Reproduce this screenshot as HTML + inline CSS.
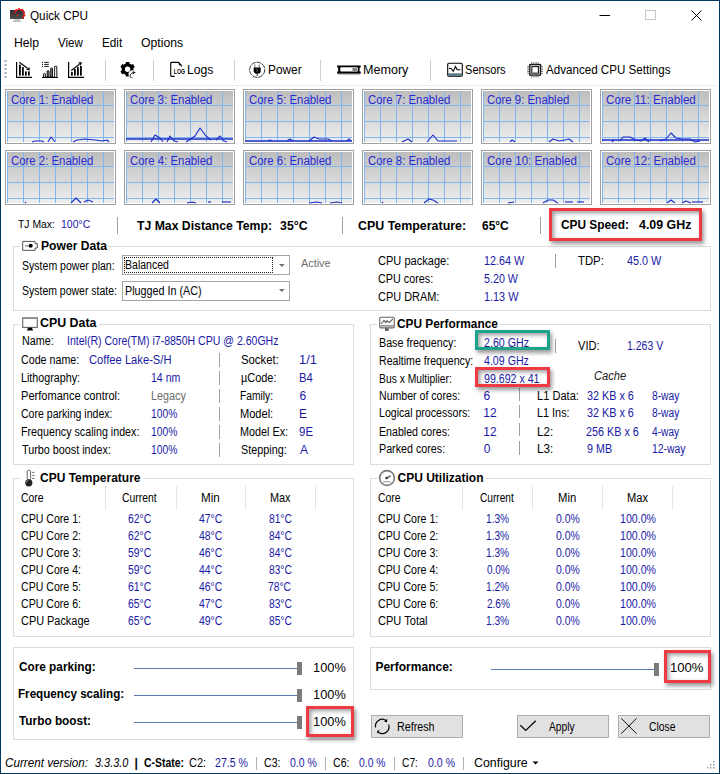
<!DOCTYPE html>
<html><head><meta charset="utf-8"><title>Quick CPU</title>
<style>
html,body{margin:0;padding:0;background:#fff;}
body{width:720px;height:774px;position:relative;overflow:hidden;font-family:"Liberation Sans",sans-serif;color:#000;}
.t{position:absolute;white-space:nowrap;line-height:normal;transform-origin:0 0;}
svg{position:absolute;overflow:visible;}
</style></head><body>
<div style="position:absolute;left:0;top:0;width:720px;height:774px;box-sizing:border-box;border:1px solid #003a5c"></div>
<div class="t" style="left:29.95px;top:9px;font-size:12px;transform:scaleX(0.9766);">Quick CPU</div>
<div class="t" style="left:13.60px;top:36px;font-size:12px;transform:scaleX(1.0174);">Help</div>
<div class="t" style="left:58.24px;top:36px;font-size:12px;transform:scaleX(0.9591);">View</div>
<div class="t" style="left:101.84px;top:36px;font-size:12px;transform:scaleX(0.9792);">Edit</div>
<div class="t" style="left:141.13px;top:36px;font-size:12px;transform:scaleX(1.0184);">Options</div>
<div class="t" style="left:186.50px;top:63px;font-size:12px;transform:scaleX(1.0163);">Logs</div>
<div class="t" style="left:267.53px;top:63px;font-size:12px;transform:scaleX(0.9902);">Power</div>
<div class="t" style="left:363.37px;top:63px;font-size:12px;transform:scaleX(1.0479);">Memory</div>
<div class="t" style="left:465.49px;top:63px;font-size:12px;transform:scaleX(0.9226);">Sensors</div>
<div class="t" style="left:545.98px;top:63px;font-size:12px;transform:scaleX(0.9666);">Advanced CPU Settings</div>
<div style="position:absolute;left:105px;top:60px;width:1px;height:21px;background:#d0d0d0"></div>
<div style="position:absolute;left:153px;top:60px;width:1px;height:21px;background:#d0d0d0"></div>
<div style="position:absolute;left:234px;top:60px;width:1px;height:21px;background:#d0d0d0"></div>
<div style="position:absolute;left:320px;top:60px;width:1px;height:21px;background:#d0d0d0"></div>
<div style="position:absolute;left:430px;top:60px;width:1px;height:21px;background:#d0d0d0"></div>
<div style="position:absolute;left:3px;top:85px;width:714px;height:1px;background:#ececec"></div>
<svg style="left:5px;top:89px" width="111" height="55"><defs><linearGradient id="g1" x1="0" y1="0" x2="0" y2="1"><stop offset="0" stop-color="#bdbdbd"/><stop offset="1" stop-color="#eeeeee"/></linearGradient></defs><rect x="0.5" y="0.5" width="110" height="54" fill="#fff" stroke="#a0a0a0"/><rect x="2" y="2" width="107" height="51" fill="url(#g1)"/><path d="M2.5 2V53M18.5 2V53M34.5 2V53M50.5 2V53M66.5 2V53M82.5 2V53M98.5 2V53M2 16.5H109M2 32.5H109M2 48.5H109" stroke="#80b6f0" stroke-width="1" fill="none"/><polyline points="27,53 30,52 37,52 39,53" stroke="#1c2fc8" stroke-width="1.15" fill="none" stroke-linejoin="round"/><polyline points="43,53 46,48 50,53" stroke="#1c2fc8" stroke-width="1.15" fill="none" stroke-linejoin="round"/><polyline points="68,53 72,51 80,50 90,51 98,52 102,51 104,53" stroke="#1c2fc8" stroke-width="1.15" fill="none" stroke-linejoin="round"/></svg>
<svg style="left:5px;top:150px" width="111" height="55"><defs><linearGradient id="g2" x1="0" y1="0" x2="0" y2="1"><stop offset="0" stop-color="#bdbdbd"/><stop offset="1" stop-color="#eeeeee"/></linearGradient></defs><rect x="0.5" y="0.5" width="110" height="54" fill="#fff" stroke="#a0a0a0"/><rect x="2" y="2" width="107" height="51" fill="url(#g2)"/><path d="M2.5 2V53M18.5 2V53M34.5 2V53M50.5 2V53M66.5 2V53M82.5 2V53M98.5 2V53M2 16.5H109M2 32.5H109M2 48.5H109" stroke="#80b6f0" stroke-width="1" fill="none"/><polyline points="20,53 21,52" stroke="#1c2fc8" stroke-width="1.15" fill="none" stroke-linejoin="round"/><polyline points="66,53 71,48 76,53" stroke="#1c2fc8" stroke-width="1.15" fill="none" stroke-linejoin="round"/><polyline points="79,52 83,50 88,52" stroke="#1c2fc8" stroke-width="1.15" fill="none" stroke-linejoin="round"/></svg>
<svg style="left:124px;top:89px" width="111" height="55"><defs><linearGradient id="g3" x1="0" y1="0" x2="0" y2="1"><stop offset="0" stop-color="#bdbdbd"/><stop offset="1" stop-color="#eeeeee"/></linearGradient></defs><rect x="0.5" y="0.5" width="110" height="54" fill="#fff" stroke="#a0a0a0"/><rect x="2" y="2" width="107" height="51" fill="url(#g3)"/><path d="M2.5 2V53M18.5 2V53M34.5 2V53M50.5 2V53M66.5 2V53M82.5 2V53M98.5 2V53M2 16.5H109M2 32.5H109M2 48.5H109" stroke="#80b6f0" stroke-width="1" fill="none"/><path d="M2 50H109" stroke="#1c2fc8" stroke-width="1.5" fill="none"/><polyline points="27,53 31,46 36,49 39,53" stroke="#1c2fc8" stroke-width="1.15" fill="none" stroke-linejoin="round"/><polyline points="43,53 46,47 50,52 54,53" stroke="#1c2fc8" stroke-width="1.15" fill="none" stroke-linejoin="round"/><polyline points="62,53 68,49 71,47 76,39 82,47 87,51" stroke="#1c2fc8" stroke-width="1.15" fill="none" stroke-linejoin="round"/><polyline points="92,51 96,47 100,52 103,53" stroke="#1c2fc8" stroke-width="1.15" fill="none" stroke-linejoin="round"/></svg>
<svg style="left:124px;top:150px" width="111" height="55"><defs><linearGradient id="g4" x1="0" y1="0" x2="0" y2="1"><stop offset="0" stop-color="#bdbdbd"/><stop offset="1" stop-color="#eeeeee"/></linearGradient></defs><rect x="0.5" y="0.5" width="110" height="54" fill="#fff" stroke="#a0a0a0"/><rect x="2" y="2" width="107" height="51" fill="url(#g4)"/><path d="M2.5 2V53M18.5 2V53M34.5 2V53M50.5 2V53M66.5 2V53M82.5 2V53M98.5 2V53M2 16.5H109M2 32.5H109M2 48.5H109" stroke="#80b6f0" stroke-width="1" fill="none"/><polyline points="28,53 32,49 36,53" stroke="#1c2fc8" stroke-width="1.15" fill="none" stroke-linejoin="round"/><polyline points="63,53 68,52 72,53" stroke="#1c2fc8" stroke-width="1.15" fill="none" stroke-linejoin="round"/><polyline points="84,52 87,52" stroke="#1c2fc8" stroke-width="1.15" fill="none" stroke-linejoin="round"/><polyline points="98,52 107,52" stroke="#1c2fc8" stroke-width="1.15" fill="none" stroke-linejoin="round"/></svg>
<svg style="left:243px;top:89px" width="111" height="55"><defs><linearGradient id="g5" x1="0" y1="0" x2="0" y2="1"><stop offset="0" stop-color="#bdbdbd"/><stop offset="1" stop-color="#eeeeee"/></linearGradient></defs><rect x="0.5" y="0.5" width="110" height="54" fill="#fff" stroke="#a0a0a0"/><rect x="2" y="2" width="107" height="51" fill="url(#g5)"/><path d="M2.5 2V53M18.5 2V53M34.5 2V53M50.5 2V53M66.5 2V53M82.5 2V53M98.5 2V53M2 16.5H109M2 32.5H109M2 48.5H109" stroke="#80b6f0" stroke-width="1" fill="none"/><path d="M2 52H109" stroke="#1c2fc8" stroke-width="1.5" fill="none"/><polyline points="25,52 27,51 29,52" stroke="#1c2fc8" stroke-width="1.15" fill="none" stroke-linejoin="round"/><polyline points="44,52 47,50 50,52" stroke="#1c2fc8" stroke-width="1.15" fill="none" stroke-linejoin="round"/><polyline points="66,52 71,48 76,50 85,50 89,52" stroke="#1c2fc8" stroke-width="1.15" fill="none" stroke-linejoin="round"/><polyline points="104,52 106,50 108,52" stroke="#1c2fc8" stroke-width="1.15" fill="none" stroke-linejoin="round"/></svg>
<svg style="left:243px;top:150px" width="111" height="55"><defs><linearGradient id="g6" x1="0" y1="0" x2="0" y2="1"><stop offset="0" stop-color="#bdbdbd"/><stop offset="1" stop-color="#eeeeee"/></linearGradient></defs><rect x="0.5" y="0.5" width="110" height="54" fill="#fff" stroke="#a0a0a0"/><rect x="2" y="2" width="107" height="51" fill="url(#g6)"/><path d="M2.5 2V53M18.5 2V53M34.5 2V53M50.5 2V53M66.5 2V53M82.5 2V53M98.5 2V53M2 16.5H109M2 32.5H109M2 48.5H109" stroke="#80b6f0" stroke-width="1" fill="none"/><polyline points="66,53 74,52 79,53" stroke="#1c2fc8" stroke-width="1.15" fill="none" stroke-linejoin="round"/><polyline points="87,53 94,52 99,53" stroke="#1c2fc8" stroke-width="1.15" fill="none" stroke-linejoin="round"/></svg>
<svg style="left:362px;top:89px" width="111" height="55"><defs><linearGradient id="g7" x1="0" y1="0" x2="0" y2="1"><stop offset="0" stop-color="#bdbdbd"/><stop offset="1" stop-color="#eeeeee"/></linearGradient></defs><rect x="0.5" y="0.5" width="110" height="54" fill="#fff" stroke="#a0a0a0"/><rect x="2" y="2" width="107" height="51" fill="url(#g7)"/><path d="M2.5 2V53M18.5 2V53M34.5 2V53M50.5 2V53M66.5 2V53M82.5 2V53M98.5 2V53M2 16.5H109M2 32.5H109M2 48.5H109" stroke="#80b6f0" stroke-width="1" fill="none"/><polyline points="40,53 46,50 50,53" stroke="#1c2fc8" stroke-width="1.15" fill="none" stroke-linejoin="round"/><polyline points="65,53 71,46 76,52 86,52 95,52" stroke="#1c2fc8" stroke-width="1.15" fill="none" stroke-linejoin="round"/></svg>
<svg style="left:362px;top:150px" width="111" height="55"><defs><linearGradient id="g8" x1="0" y1="0" x2="0" y2="1"><stop offset="0" stop-color="#bdbdbd"/><stop offset="1" stop-color="#eeeeee"/></linearGradient></defs><rect x="0.5" y="0.5" width="110" height="54" fill="#fff" stroke="#a0a0a0"/><rect x="2" y="2" width="107" height="51" fill="url(#g8)"/><path d="M2.5 2V53M18.5 2V53M34.5 2V53M50.5 2V53M66.5 2V53M82.5 2V53M98.5 2V53M2 16.5H109M2 32.5H109M2 48.5H109" stroke="#80b6f0" stroke-width="1" fill="none"/><polyline points="20,53 21,52" stroke="#1c2fc8" stroke-width="1.15" fill="none" stroke-linejoin="round"/><polyline points="62,53 67,49 71,50 76,53" stroke="#1c2fc8" stroke-width="1.15" fill="none" stroke-linejoin="round"/></svg>
<svg style="left:481px;top:89px" width="111" height="55"><defs><linearGradient id="g9" x1="0" y1="0" x2="0" y2="1"><stop offset="0" stop-color="#bdbdbd"/><stop offset="1" stop-color="#eeeeee"/></linearGradient></defs><rect x="0.5" y="0.5" width="110" height="54" fill="#fff" stroke="#a0a0a0"/><rect x="2" y="2" width="107" height="51" fill="url(#g9)"/><path d="M2.5 2V53M18.5 2V53M34.5 2V53M50.5 2V53M66.5 2V53M82.5 2V53M98.5 2V53M2 16.5H109M2 32.5H109M2 48.5H109" stroke="#80b6f0" stroke-width="1" fill="none"/><polyline points="29,53 31,51 34,53" stroke="#1c2fc8" stroke-width="1.15" fill="none" stroke-linejoin="round"/><polyline points="68,53 72,50 78,52 84,51 88,50 92,53" stroke="#1c2fc8" stroke-width="1.15" fill="none" stroke-linejoin="round"/></svg>
<svg style="left:481px;top:150px" width="111" height="55"><defs><linearGradient id="g10" x1="0" y1="0" x2="0" y2="1"><stop offset="0" stop-color="#bdbdbd"/><stop offset="1" stop-color="#eeeeee"/></linearGradient></defs><rect x="0.5" y="0.5" width="110" height="54" fill="#fff" stroke="#a0a0a0"/><rect x="2" y="2" width="107" height="51" fill="url(#g10)"/><path d="M2.5 2V53M18.5 2V53M34.5 2V53M50.5 2V53M66.5 2V53M82.5 2V53M98.5 2V53M2 16.5H109M2 32.5H109M2 48.5H109" stroke="#80b6f0" stroke-width="1" fill="none"/><polyline points="27,53 33,52" stroke="#1c2fc8" stroke-width="1.15" fill="none" stroke-linejoin="round"/><polyline points="62,53 67,50 72,50 77,53" stroke="#1c2fc8" stroke-width="1.15" fill="none" stroke-linejoin="round"/><polyline points="84,52 92,52" stroke="#1c2fc8" stroke-width="1.15" fill="none" stroke-linejoin="round"/><polyline points="96,52 103,52" stroke="#1c2fc8" stroke-width="1.15" fill="none" stroke-linejoin="round"/></svg>
<svg style="left:600px;top:89px" width="111" height="55"><defs><linearGradient id="g11" x1="0" y1="0" x2="0" y2="1"><stop offset="0" stop-color="#bdbdbd"/><stop offset="1" stop-color="#eeeeee"/></linearGradient></defs><rect x="0.5" y="0.5" width="110" height="54" fill="#fff" stroke="#a0a0a0"/><rect x="2" y="2" width="107" height="51" fill="url(#g11)"/><path d="M2.5 2V53M18.5 2V53M34.5 2V53M50.5 2V53M66.5 2V53M82.5 2V53M98.5 2V53M2 16.5H109M2 32.5H109M2 48.5H109" stroke="#80b6f0" stroke-width="1" fill="none"/><path d="M2 51H109" stroke="#1c2fc8" stroke-width="1.5" fill="none"/><polyline points="12,53 14,51" stroke="#1c2fc8" stroke-width="1.15" fill="none" stroke-linejoin="round"/><polyline points="20,52 23,48 30,48 36,51 41,52 45,49 49,53" stroke="#1c2fc8" stroke-width="1.15" fill="none" stroke-linejoin="round"/><polyline points="60,52 66,50 71,44 76,49 82,50 90,50 95,53 100,52" stroke="#1c2fc8" stroke-width="1.15" fill="none" stroke-linejoin="round"/></svg>
<svg style="left:600px;top:150px" width="111" height="55"><defs><linearGradient id="g12" x1="0" y1="0" x2="0" y2="1"><stop offset="0" stop-color="#bdbdbd"/><stop offset="1" stop-color="#eeeeee"/></linearGradient></defs><rect x="0.5" y="0.5" width="110" height="54" fill="#fff" stroke="#a0a0a0"/><rect x="2" y="2" width="107" height="51" fill="url(#g12)"/><path d="M2.5 2V53M18.5 2V53M34.5 2V53M50.5 2V53M66.5 2V53M82.5 2V53M98.5 2V53M2 16.5H109M2 32.5H109M2 48.5H109" stroke="#80b6f0" stroke-width="1" fill="none"/><polyline points="67,53 71,50 75,53" stroke="#1c2fc8" stroke-width="1.15" fill="none" stroke-linejoin="round"/><polyline points="82,53 86,51 91,53" stroke="#1c2fc8" stroke-width="1.15" fill="none" stroke-linejoin="round"/><polyline points="92,52 103,52" stroke="#1c2fc8" stroke-width="1.15" fill="none" stroke-linejoin="round"/></svg>
<div class="t" style="left:10.72px;top:93px;font-size:12px;color:#2a2ad0;transform:scaleX(0.9491);">Core 1: Enabled</div>
<div class="t" style="left:10.72px;top:154px;font-size:12px;color:#2a2ad0;transform:scaleX(0.9491);">Core 2: Enabled</div>
<div class="t" style="left:129.72px;top:93px;font-size:12px;color:#2a2ad0;transform:scaleX(0.9491);">Core 3: Enabled</div>
<div class="t" style="left:129.72px;top:154px;font-size:12px;color:#2a2ad0;transform:scaleX(0.9491);">Core 4: Enabled</div>
<div class="t" style="left:248.72px;top:93px;font-size:12px;color:#2a2ad0;transform:scaleX(0.9491);">Core 5: Enabled</div>
<div class="t" style="left:248.72px;top:154px;font-size:12px;color:#2a2ad0;transform:scaleX(0.9491);">Core 6: Enabled</div>
<div class="t" style="left:367.72px;top:93px;font-size:12px;color:#2a2ad0;transform:scaleX(0.9491);">Core 7: Enabled</div>
<div class="t" style="left:367.72px;top:154px;font-size:12px;color:#2a2ad0;transform:scaleX(0.9491);">Core 8: Enabled</div>
<div class="t" style="left:486.72px;top:93px;font-size:12px;color:#2a2ad0;transform:scaleX(0.9491);">Core 9: Enabled</div>
<div class="t" style="left:486.71px;top:154px;font-size:12px;color:#2a2ad0;transform:scaleX(0.9618);">Core 10: Enabled</div>
<div class="t" style="left:605.71px;top:93px;font-size:12px;color:#2a2ad0;transform:scaleX(0.9712);">Core 11: Enabled</div>
<div class="t" style="left:605.71px;top:154px;font-size:12px;color:#2a2ad0;transform:scaleX(0.9618);">Core 12: Enabled</div>
<div class="t" style="left:17.77px;top:218px;font-size:11.5px;transform:scaleX(0.9016);">TJ Max:</div>
<div class="t" style="left:61.20px;top:218px;font-size:11.5px;color:#1a1aa6;transform:scaleX(0.9099);">100°C</div>
<div style="position:absolute;left:117px;top:217px;width:1px;height:17px;background:#a0a0a0"></div>
<div class="t" style="left:137.47px;top:219px;font-size:12.5px;font-weight:bold;transform:scaleX(0.9783);">TJ Max Distance Temp:</div>
<div class="t" style="left:279.52px;top:219px;font-size:12.5px;font-weight:bold;transform:scaleX(0.9890);">35°C</div>
<div style="position:absolute;left:342px;top:217px;width:1px;height:17px;background:#a0a0a0"></div>
<div class="t" style="left:358.49px;top:219px;font-size:12.5px;font-weight:bold;transform:scaleX(0.9933);">CPU Temperature:</div>
<div class="t" style="left:481.76px;top:219px;font-size:12.5px;font-weight:bold;transform:scaleX(0.9585);">65°C</div>
<div style="position:absolute;left:540px;top:217px;width:1px;height:17px;background:#a0a0a0"></div>
<div class="t" style="left:560.51px;top:218px;font-size:12.5px;font-weight:bold;transform:scaleX(0.9481);">CPU Speed:</div>
<div class="t" style="left:638.61px;top:218px;font-size:12.5px;font-weight:bold;transform:scaleX(0.9911);">4.09 GHz</div>
<div style="position:absolute;left:13px;top:246px;width:7px;height:1px;background:#dcdcdc"></div>
<div style="position:absolute;left:108px;top:246px;width:603px;height:1px;background:#dcdcdc"></div>
<div style="position:absolute;left:13px;top:246px;width:1px;height:65px;background:#dcdcdc"></div>
<div style="position:absolute;left:710px;top:246px;width:1px;height:65px;background:#dcdcdc"></div>
<div style="position:absolute;left:13px;top:310px;width:698px;height:1px;background:#dcdcdc"></div>
<div style="position:absolute;left:13px;top:324px;width:7px;height:1px;background:#dcdcdc"></div>
<div style="position:absolute;left:99px;top:324px;width:255px;height:1px;background:#dcdcdc"></div>
<div style="position:absolute;left:13px;top:324px;width:1px;height:141px;background:#dcdcdc"></div>
<div style="position:absolute;left:353px;top:324px;width:1px;height:141px;background:#dcdcdc"></div>
<div style="position:absolute;left:13px;top:464px;width:341px;height:1px;background:#dcdcdc"></div>
<div style="position:absolute;left:370px;top:324px;width:7px;height:1px;background:#dcdcdc"></div>
<div style="position:absolute;left:500px;top:324px;width:211px;height:1px;background:#dcdcdc"></div>
<div style="position:absolute;left:370px;top:324px;width:1px;height:141px;background:#dcdcdc"></div>
<div style="position:absolute;left:710px;top:324px;width:1px;height:141px;background:#dcdcdc"></div>
<div style="position:absolute;left:370px;top:464px;width:341px;height:1px;background:#dcdcdc"></div>
<div style="position:absolute;left:13px;top:478px;width:7px;height:1px;background:#dcdcdc"></div>
<div style="position:absolute;left:143px;top:478px;width:211px;height:1px;background:#dcdcdc"></div>
<div style="position:absolute;left:13px;top:478px;width:1px;height:159px;background:#dcdcdc"></div>
<div style="position:absolute;left:353px;top:478px;width:1px;height:159px;background:#dcdcdc"></div>
<div style="position:absolute;left:13px;top:636px;width:341px;height:1px;background:#dcdcdc"></div>
<div style="position:absolute;left:370px;top:478px;width:7px;height:1px;background:#dcdcdc"></div>
<div style="position:absolute;left:485px;top:478px;width:226px;height:1px;background:#dcdcdc"></div>
<div style="position:absolute;left:370px;top:478px;width:1px;height:159px;background:#dcdcdc"></div>
<div style="position:absolute;left:710px;top:478px;width:1px;height:159px;background:#dcdcdc"></div>
<div style="position:absolute;left:370px;top:636px;width:341px;height:1px;background:#dcdcdc"></div>
<div style="position:absolute;left:13px;top:647px;width:341px;height:1px;background:#dcdcdc"></div>
<div style="position:absolute;left:13px;top:647px;width:1px;height:93px;background:#dcdcdc"></div>
<div style="position:absolute;left:353px;top:647px;width:1px;height:93px;background:#dcdcdc"></div>
<div style="position:absolute;left:13px;top:739px;width:341px;height:1px;background:#dcdcdc"></div>
<div style="position:absolute;left:370px;top:647px;width:341px;height:1px;background:#dcdcdc"></div>
<div style="position:absolute;left:370px;top:647px;width:1px;height:43px;background:#dcdcdc"></div>
<div style="position:absolute;left:710px;top:647px;width:1px;height:43px;background:#dcdcdc"></div>
<div style="position:absolute;left:370px;top:689px;width:341px;height:1px;background:#dcdcdc"></div>
<div class="t" style="left:40.59px;top:239px;font-size:12px;font-weight:bold;transform:scaleX(1.0105);">Power Data</div>
<div class="t" style="left:40.19px;top:316px;font-size:12px;font-weight:bold;transform:scaleX(1.0320);">CPU Data</div>
<div class="t" style="left:397.01px;top:317px;font-size:12px;font-weight:bold;transform:scaleX(0.9888);">CPU Performance</div>
<div class="t" style="left:40.01px;top:471px;font-size:12px;font-weight:bold;">CPU Temperature</div>
<div class="t" style="left:397.51px;top:471px;font-size:12px;font-weight:bold;">CPU Utilization</div>
<div class="t" style="left:21.81px;top:259px;font-size:12px;transform:scaleX(0.8791);">System power plan:</div>
<div class="t" style="left:21.82px;top:284px;font-size:12px;transform:scaleX(0.8733);">System power state:</div>
<div style="position:absolute;left:122px;top:255px;width:168px;height:20px;box-sizing:border-box;border:1px solid #a6a6a6;background:#fff"></div>
<div style="position:absolute;left:124px;top:257px;width:149px;height:16px;box-sizing:border-box;border:1px dotted #202020"></div>
<div style="position:absolute;left:122px;top:281px;width:168px;height:20px;box-sizing:border-box;border:1px solid #a6a6a6;background:#fff"></div>
<div class="t" style="left:124.74px;top:258px;font-size:12px;transform:scaleX(0.8781);">Balanced</div>
<div class="t" style="left:124.72px;top:284px;font-size:12px;transform:scaleX(0.8966);">Plugged In (AC)</div>
<div class="t" style="left:300.98px;top:257px;font-size:11.5px;color:#6d6d6d;transform:scaleX(0.9420);">Active</div>
<svg style="position:absolute;left:279px;top:264px" width="6" height="4"><path d="M0 0H5.6L2.8 3Z" fill="#707070"/></svg>
<svg style="position:absolute;left:279px;top:289px" width="6" height="4"><path d="M0 0H5.6L2.8 3Z" fill="#707070"/></svg>
<div class="t" style="left:378.34px;top:254px;font-size:12px;transform:scaleX(0.9211);">CPU package:</div>
<div class="t" style="left:378.35px;top:272px;font-size:12px;transform:scaleX(0.8985);">CPU cores:</div>
<div class="t" style="left:378.34px;top:290px;font-size:12px;transform:scaleX(0.9118);">CPU DRAM:</div>
<div class="t" style="left:483.68px;top:254px;font-size:12px;color:#1a1aa6;transform:scaleX(0.8976);">12.64 W</div>
<div class="t" style="left:484.07px;top:272px;font-size:12px;color:#1a1aa6;transform:scaleX(0.8936);">5.20 W</div>
<div class="t" style="left:483.68px;top:290px;font-size:12px;color:#1a1aa6;transform:scaleX(0.9040);">1.13 W</div>
<div style="position:absolute;left:555px;top:254px;width:1px;height:14px;background:#a0a0a0"></div>
<div class="t" style="left:577.75px;top:254px;font-size:12px;transform:scaleX(0.9430);">TDP:</div>
<div class="t" style="left:626.75px;top:254px;font-size:12px;color:#1a1aa6;transform:scaleX(0.9020);">45.0 W</div>
<div class="t" style="left:21.61px;top:334px;font-size:12px;transform:scaleX(0.9016);">Name:</div>
<div class="t" style="left:67.33px;top:334px;font-size:12px;color:#1a1aa6;transform:scaleX(0.8777);">Intel(R) Core(TM) i7-8850H CPU @ 2.60GHz</div>
<div class="t" style="left:21.46px;top:353px;font-size:12px;transform:scaleX(0.8905);">Code name:</div>
<div class="t" style="left:89.13px;top:353px;font-size:12px;color:#1a1aa6;transform:scaleX(0.9326);">Coffee Lake-S/H</div>
<div style="position:absolute;left:219px;top:353px;width:1px;height:14px;background:#a0a0a0"></div>
<div class="t" style="left:21.12px;top:371px;font-size:12px;transform:scaleX(0.8941);">Lithography:</div>
<div class="t" style="left:150.80px;top:371px;font-size:12px;color:#1a1aa6;transform:scaleX(0.8785);">14 nm</div>
<div style="position:absolute;left:219px;top:371px;width:1px;height:14px;background:#a0a0a0"></div>
<div class="t" style="left:21.09px;top:389px;font-size:12px;transform:scaleX(0.9230);">Perfomance control:</div>
<div class="t" style="left:150.71px;top:389px;font-size:12px;color:#6d6d6d;transform:scaleX(0.9020);">Legacy</div>
<div style="position:absolute;left:219px;top:389px;width:1px;height:14px;background:#a0a0a0"></div>
<div class="t" style="left:21.46px;top:407px;font-size:12px;transform:scaleX(0.8792);">Core parking index:</div>
<div class="t" style="left:150.82px;top:407px;font-size:12px;color:#1a1aa6;transform:scaleX(0.8585);">100%</div>
<div style="position:absolute;left:219px;top:407px;width:1px;height:14px;background:#a0a0a0"></div>
<div class="t" style="left:21.12px;top:425px;font-size:12px;transform:scaleX(0.8916);">Frequency scaling index:</div>
<div class="t" style="left:150.82px;top:425px;font-size:12px;color:#1a1aa6;transform:scaleX(0.8585);">100%</div>
<div style="position:absolute;left:219px;top:425px;width:1px;height:14px;background:#a0a0a0"></div>
<div class="t" style="left:21.76px;top:443px;font-size:12px;transform:scaleX(0.8986);">Turbo boost index:</div>
<div class="t" style="left:150.82px;top:443px;font-size:12px;color:#1a1aa6;transform:scaleX(0.8585);">100%</div>
<div style="position:absolute;left:219px;top:443px;width:1px;height:14px;background:#a0a0a0"></div>
<div class="t" style="left:240.73px;top:353px;font-size:12px;transform:scaleX(0.9446);">Socket:</div>
<div class="t" style="left:299.02px;top:353px;font-size:12px;color:#1a1aa6;transform:scaleX(1.0705);">1/1</div>
<div class="t" style="left:240.51px;top:371px;font-size:12px;transform:scaleX(0.9114);">µCode:</div>
<div class="t" style="left:299.08px;top:371px;font-size:12px;color:#1a1aa6;transform:scaleX(0.9368);">B4</div>
<div class="t" style="left:240.41px;top:389px;font-size:12px;transform:scaleX(0.8541);">Family:</div>
<div class="t" style="left:299.39px;top:389px;font-size:12px;color:#1a1aa6;">6</div>
<div class="t" style="left:240.34px;top:407px;font-size:12px;transform:scaleX(0.9205);">Model:</div>
<div class="t" style="left:299.02px;top:407px;font-size:12px;color:#1a1aa6;">E</div>
<div class="t" style="left:240.36px;top:425px;font-size:12px;transform:scaleX(0.9020);">Model Ex:</div>
<div class="t" style="left:299.46px;top:425px;font-size:12px;color:#1a1aa6;transform:scaleX(0.9562);">9E</div>
<div class="t" style="left:240.75px;top:443px;font-size:12px;transform:scaleX(0.9018);">Stepping:</div>
<div class="t" style="left:299.98px;top:443px;font-size:12px;color:#1a1aa6;">A</div>
<div class="t" style="left:378.82px;top:336px;font-size:12px;transform:scaleX(0.8931);">Base frequency:</div>
<div class="t" style="left:483.67px;top:336px;font-size:12px;color:#1a1aa6;transform:scaleX(0.8911);">2.60 GHz</div>
<div class="t" style="left:378.83px;top:354px;font-size:12px;transform:scaleX(0.8821);">Realtime frequency:</div>
<div class="t" style="left:483.96px;top:354px;font-size:12px;color:#1a1aa6;transform:scaleX(0.8853);">4.09 GHz</div>
<div class="t" style="left:378.85px;top:372px;font-size:12px;transform:scaleX(0.8606);">Bus x Multiplier:</div>
<div class="t" style="left:483.70px;top:372px;font-size:12px;color:#1a1aa6;transform:scaleX(0.8853);">99.692 x 41</div>
<div class="t" style="left:378.83px;top:389px;font-size:12px;transform:scaleX(0.8815);">Number of cores:</div>
<div class="t" style="left:483.59px;top:389px;font-size:12px;color:#1a1aa6;">6</div>
<div class="t" style="left:378.83px;top:406px;font-size:12px;transform:scaleX(0.8815);">Logical processors:</div>
<div class="t" style="left:483.29px;top:406px;font-size:12px;color:#1a1aa6;">12</div>
<div class="t" style="left:378.83px;top:425px;font-size:12px;transform:scaleX(0.8862);">Enabled cores:</div>
<div class="t" style="left:483.29px;top:425px;font-size:12px;color:#1a1aa6;">12</div>
<div class="t" style="left:378.82px;top:442px;font-size:12px;transform:scaleX(0.8935);">Parked cores:</div>
<div class="t" style="left:483.73px;top:442px;font-size:12px;color:#1a1aa6;">0</div>
<div style="position:absolute;left:519px;top:388px;width:1px;height:13px;background:#a0a0a0"></div>
<div style="position:absolute;left:519px;top:405px;width:1px;height:13px;background:#a0a0a0"></div>
<div style="position:absolute;left:519px;top:423px;width:1px;height:13px;background:#a0a0a0"></div>
<div style="position:absolute;left:519px;top:441px;width:1px;height:14px;background:#a0a0a0"></div>
<div style="position:absolute;left:555px;top:339px;width:1px;height:14px;background:#a0a0a0"></div>
<div class="t" style="left:577.94px;top:339px;font-size:12px;transform:scaleX(0.9239);">VID:</div>
<div class="t" style="left:627.10px;top:339px;font-size:12px;color:#1a1aa6;transform:scaleX(0.8739);">1.263 V</div>
<div class="t" style="left:593.69px;top:369px;font-size:12px;font-style:italic;color:#202020;transform:scaleX(0.9263);">Cache</div>
<div class="t" style="left:537.39px;top:389px;font-size:12px;transform:scaleX(0.9241);">L1 Data:</div>
<div class="t" style="left:586.59px;top:389px;font-size:12px;color:#1a1aa6;transform:scaleX(0.9011);">32 KB x 6</div>
<div class="t" style="left:651.86px;top:389px;font-size:12px;color:#1a1aa6;transform:scaleX(0.8546);">8-way</div>
<div class="t" style="left:537.41px;top:406px;font-size:12px;transform:scaleX(0.9043);">L1 Ins:</div>
<div class="t" style="left:586.59px;top:406px;font-size:12px;color:#1a1aa6;transform:scaleX(0.9011);">32 KB x 6</div>
<div class="t" style="left:651.86px;top:406px;font-size:12px;color:#1a1aa6;transform:scaleX(0.8546);">8-way</div>
<div class="t" style="left:537.34px;top:425px;font-size:12px;transform:scaleX(0.9723);">L2:</div>
<div class="t" style="left:586.46px;top:425px;font-size:12px;color:#1a1aa6;transform:scaleX(0.8997);">256 KB x 6</div>
<div class="t" style="left:652.07px;top:425px;font-size:12px;color:#1a1aa6;transform:scaleX(0.8482);">4-way</div>
<div class="t" style="left:537.34px;top:442px;font-size:12px;transform:scaleX(0.9723);">L3:</div>
<div class="t" style="left:586.50px;top:442px;font-size:12px;color:#1a1aa6;transform:scaleX(0.8953);">9 MB</div>
<div class="t" style="left:651.51px;top:442px;font-size:12px;color:#1a1aa6;transform:scaleX(0.8662);">12-way</div>
<div class="t" style="left:21.47px;top:491px;font-size:12px;transform:scaleX(0.8687);">Core</div>
<div style="position:absolute;left:105px;top:486px;width:1px;height:24px;background:#e5e5e5"></div>
<div style="position:absolute;left:176px;top:486px;width:1px;height:24px;background:#e5e5e5"></div>
<div style="position:absolute;left:245px;top:486px;width:1px;height:24px;background:#e5e5e5"></div>
<div style="position:absolute;left:315px;top:486px;width:1px;height:24px;background:#e5e5e5"></div>
<div class="t" style="left:122.47px;top:491px;font-size:12px;transform:scaleX(0.8646);">Current</div>
<div class="t" style="left:201.05px;top:491px;font-size:12px;transform:scaleX(0.9677);">Min</div>
<div class="t" style="left:270.16px;top:491px;font-size:12px;transform:scaleX(0.9048);">Max</div>
<div class="t" style="left:21.46px;top:512px;font-size:12px;transform:scaleX(0.8820);">CPU Core 1:</div>
<div class="t" style="left:128.32px;top:512px;font-size:12px;color:#1a1aa6;transform:scaleX(0.8664);">62°C</div>
<div class="t" style="left:198.81px;top:512px;font-size:12px;color:#1a1aa6;transform:scaleX(0.8705);">47°C</div>
<div class="t" style="left:268.56px;top:512px;font-size:12px;color:#1a1aa6;transform:scaleX(0.8515);">81°C</div>
<div class="t" style="left:21.46px;top:529px;font-size:12px;transform:scaleX(0.8820);">CPU Core 2:</div>
<div class="t" style="left:128.32px;top:529px;font-size:12px;color:#1a1aa6;transform:scaleX(0.8664);">62°C</div>
<div class="t" style="left:198.81px;top:529px;font-size:12px;color:#1a1aa6;transform:scaleX(0.8705);">48°C</div>
<div class="t" style="left:268.56px;top:529px;font-size:12px;color:#1a1aa6;transform:scaleX(0.8515);">84°C</div>
<div class="t" style="left:21.46px;top:546px;font-size:12px;transform:scaleX(0.8820);">CPU Core 3:</div>
<div class="t" style="left:128.44px;top:546px;font-size:12px;color:#1a1aa6;transform:scaleX(0.8619);">59°C</div>
<div class="t" style="left:198.81px;top:546px;font-size:12px;color:#1a1aa6;transform:scaleX(0.8705);">46°C</div>
<div class="t" style="left:268.56px;top:546px;font-size:12px;color:#1a1aa6;transform:scaleX(0.8515);">84°C</div>
<div class="t" style="left:21.46px;top:563px;font-size:12px;transform:scaleX(0.8820);">CPU Core 4:</div>
<div class="t" style="left:128.44px;top:563px;font-size:12px;color:#1a1aa6;transform:scaleX(0.8619);">59°C</div>
<div class="t" style="left:198.81px;top:563px;font-size:12px;color:#1a1aa6;transform:scaleX(0.8705);">44°C</div>
<div class="t" style="left:268.56px;top:563px;font-size:12px;color:#1a1aa6;transform:scaleX(0.8515);">83°C</div>
<div class="t" style="left:21.46px;top:580px;font-size:12px;transform:scaleX(0.8820);">CPU Core 5:</div>
<div class="t" style="left:128.32px;top:580px;font-size:12px;color:#1a1aa6;transform:scaleX(0.8664);">61°C</div>
<div class="t" style="left:198.81px;top:580px;font-size:12px;color:#1a1aa6;transform:scaleX(0.8705);">46°C</div>
<div class="t" style="left:268.48px;top:580px;font-size:12px;color:#1a1aa6;transform:scaleX(0.8547);">78°C</div>
<div class="t" style="left:21.46px;top:597px;font-size:12px;transform:scaleX(0.8820);">CPU Core 6:</div>
<div class="t" style="left:128.32px;top:597px;font-size:12px;color:#1a1aa6;transform:scaleX(0.8664);">65°C</div>
<div class="t" style="left:198.81px;top:597px;font-size:12px;color:#1a1aa6;transform:scaleX(0.8705);">47°C</div>
<div class="t" style="left:268.56px;top:597px;font-size:12px;color:#1a1aa6;transform:scaleX(0.8515);">83°C</div>
<div class="t" style="left:21.44px;top:614px;font-size:12px;transform:scaleX(0.9093);">CPU Package</div>
<div class="t" style="left:128.32px;top:614px;font-size:12px;color:#1a1aa6;transform:scaleX(0.8664);">65°C</div>
<div class="t" style="left:198.81px;top:614px;font-size:12px;color:#1a1aa6;transform:scaleX(0.8705);">49°C</div>
<div class="t" style="left:268.56px;top:614px;font-size:12px;color:#1a1aa6;transform:scaleX(0.8515);">85°C</div>
<div class="t" style="left:378.22px;top:491px;font-size:12px;transform:scaleX(0.8687);">Core</div>
<div style="position:absolute;left:462px;top:486px;width:1px;height:24px;background:#e5e5e5"></div>
<div style="position:absolute;left:532px;top:486px;width:1px;height:24px;background:#e5e5e5"></div>
<div style="position:absolute;left:602px;top:486px;width:1px;height:24px;background:#e5e5e5"></div>
<div style="position:absolute;left:672px;top:486px;width:1px;height:24px;background:#e5e5e5"></div>
<div class="t" style="left:479.96px;top:491px;font-size:12px;transform:scaleX(0.8455);">Current</div>
<div class="t" style="left:558.03px;top:491px;font-size:12px;transform:scaleX(0.9392);">Min</div>
<div class="t" style="left:626.89px;top:491px;font-size:12px;transform:scaleX(0.9280);">Max</div>
<div class="t" style="left:378.21px;top:512px;font-size:12px;transform:scaleX(0.8858);">CPU Core 1:</div>
<div class="t" style="left:486.23px;top:512px;font-size:12px;color:#1a1aa6;transform:scaleX(0.8456);">1.3%</div>
<div class="t" style="left:555.59px;top:512px;font-size:12px;color:#1a1aa6;transform:scaleX(0.8692);">0.0%</div>
<div class="t" style="left:619.79px;top:512px;font-size:12px;color:#1a1aa6;transform:scaleX(0.8841);">100.0%</div>
<div class="t" style="left:378.21px;top:529px;font-size:12px;transform:scaleX(0.8858);">CPU Core 2:</div>
<div class="t" style="left:486.23px;top:529px;font-size:12px;color:#1a1aa6;transform:scaleX(0.8456);">1.3%</div>
<div class="t" style="left:555.59px;top:529px;font-size:12px;color:#1a1aa6;transform:scaleX(0.8692);">0.0%</div>
<div class="t" style="left:619.79px;top:529px;font-size:12px;color:#1a1aa6;transform:scaleX(0.8841);">100.0%</div>
<div class="t" style="left:378.21px;top:546px;font-size:12px;transform:scaleX(0.8858);">CPU Core 3:</div>
<div class="t" style="left:486.23px;top:546px;font-size:12px;color:#1a1aa6;transform:scaleX(0.8456);">1.3%</div>
<div class="t" style="left:555.59px;top:546px;font-size:12px;color:#1a1aa6;transform:scaleX(0.8692);">0.0%</div>
<div class="t" style="left:619.79px;top:546px;font-size:12px;color:#1a1aa6;transform:scaleX(0.8841);">100.0%</div>
<div class="t" style="left:378.21px;top:563px;font-size:12px;transform:scaleX(0.8858);">CPU Core 4:</div>
<div class="t" style="left:486.61px;top:563px;font-size:12px;color:#1a1aa6;transform:scaleX(0.8314);">0.0%</div>
<div class="t" style="left:555.59px;top:563px;font-size:12px;color:#1a1aa6;transform:scaleX(0.8692);">0.0%</div>
<div class="t" style="left:619.79px;top:563px;font-size:12px;color:#1a1aa6;transform:scaleX(0.8841);">100.0%</div>
<div class="t" style="left:378.21px;top:580px;font-size:12px;transform:scaleX(0.8858);">CPU Core 5:</div>
<div class="t" style="left:486.23px;top:580px;font-size:12px;color:#1a1aa6;transform:scaleX(0.8456);">1.2%</div>
<div class="t" style="left:555.59px;top:580px;font-size:12px;color:#1a1aa6;transform:scaleX(0.8692);">0.0%</div>
<div class="t" style="left:619.79px;top:580px;font-size:12px;color:#1a1aa6;transform:scaleX(0.8841);">100.0%</div>
<div class="t" style="left:378.21px;top:597px;font-size:12px;transform:scaleX(0.8858);">CPU Core 6:</div>
<div class="t" style="left:486.50px;top:597px;font-size:12px;color:#1a1aa6;transform:scaleX(0.8356);">2.6%</div>
<div class="t" style="left:555.59px;top:597px;font-size:12px;color:#1a1aa6;transform:scaleX(0.8692);">0.0%</div>
<div class="t" style="left:619.79px;top:597px;font-size:12px;color:#1a1aa6;transform:scaleX(0.8841);">100.0%</div>
<div class="t" style="left:378.19px;top:614px;font-size:12px;transform:scaleX(0.9212);">CPU Total</div>
<div class="t" style="left:486.23px;top:614px;font-size:12px;color:#1a1aa6;transform:scaleX(0.8456);">1.3%</div>
<div class="t" style="left:555.59px;top:614px;font-size:12px;color:#1a1aa6;transform:scaleX(0.8692);">0.0%</div>
<div class="t" style="left:619.79px;top:614px;font-size:12px;color:#1a1aa6;transform:scaleX(0.8841);">100.0%</div>
<div class="t" style="left:18.77px;top:660px;font-size:12px;font-weight:bold;transform:scaleX(0.9821);">Core parking:</div>
<div class="t" style="left:18.47px;top:687px;font-size:12px;font-weight:bold;transform:scaleX(0.9706);">Frequency scaling:</div>
<div class="t" style="left:19.12px;top:714px;font-size:12px;font-weight:bold;transform:scaleX(0.9853);">Turbo boost:</div>
<div style="position:absolute;left:134px;top:668px;width:164px;height:1px;background:#5a7bb0"></div>
<div style="position:absolute;left:297px;top:662px;width:5px;height:13px;background:#7b7b7b"></div>
<div class="t" style="left:312.62px;top:661px;font-size:12px;transform:scaleX(1.0698);">100%</div>
<div style="position:absolute;left:134px;top:695px;width:164px;height:1px;background:#5a7bb0"></div>
<div style="position:absolute;left:297px;top:689px;width:5px;height:13px;background:#7b7b7b"></div>
<div class="t" style="left:312.62px;top:688px;font-size:12px;transform:scaleX(1.0698);">100%</div>
<div style="position:absolute;left:134px;top:722px;width:164px;height:1px;background:#5a7bb0"></div>
<div style="position:absolute;left:297px;top:716px;width:5px;height:13px;background:#7b7b7b"></div>
<div class="t" style="left:312.62px;top:715px;font-size:12px;transform:scaleX(1.0698);">100%</div>
<div class="t" style="left:375.44px;top:660px;font-size:12px;font-weight:bold;">Performance:</div>
<div style="position:absolute;left:491px;top:669px;width:164px;height:1px;background:#5a7bb0"></div>
<div style="position:absolute;left:654px;top:663px;width:5px;height:13px;background:#7b7b7b"></div>
<div class="t" style="left:669.51px;top:661px;font-size:12px;transform:scaleX(1.0902);">100%</div>
<div style="position:absolute;left:371px;top:715px;width:92px;height:23px;box-sizing:border-box;border:1px solid #adadad;background:#e1e1e1"></div>
<div style="position:absolute;left:517px;top:715px;width:92px;height:23px;box-sizing:border-box;border:1px solid #adadad;background:#e1e1e1"></div>
<div style="position:absolute;left:618px;top:715px;width:92px;height:23px;box-sizing:border-box;border:1px solid #adadad;background:#e1e1e1"></div>
<div class="t" style="left:397.37px;top:720px;font-size:12px;transform:scaleX(0.8945);">Refresh</div>
<div class="t" style="left:548.98px;top:720px;font-size:12px;transform:scaleX(0.8510);">Apply</div>
<div class="t" style="left:648.97px;top:720px;font-size:12px;transform:scaleX(0.8631);">Close</div>
<div class="t" style="left:4.86px;top:756px;font-size:12px;font-style:italic;transform:scaleX(0.9735);">Current version:</div>
<div class="t" style="left:94.74px;top:756px;font-size:12px;font-style:italic;transform:scaleX(0.9088);">3.3.3.0</div>
<div class="t" style="left:134.59px;top:756px;font-size:12px;font-weight:bold;">|</div>
<div class="t" style="left:144.07px;top:756px;font-size:12px;font-weight:bold;transform:scaleX(0.8678);">C-State:</div>
<div class="t" style="left:189.44px;top:756px;font-size:12px;transform:scaleX(0.9135);">C2:</div>
<div class="t" style="left:214.97px;top:756px;font-size:12px;color:#1a1aa6;transform:scaleX(0.8807);">27.5 %</div>
<div style="position:absolute;left:256px;top:757px;width:1px;height:13px;background:#b0b0b0"></div>
<div class="t" style="left:264.46px;top:756px;font-size:12px;transform:scaleX(0.8840);">C3:</div>
<div class="t" style="left:289.59px;top:756px;font-size:12px;color:#1a1aa6;transform:scaleX(0.8726);">0.0 %</div>
<div style="position:absolute;left:325px;top:757px;width:1px;height:13px;background:#b0b0b0"></div>
<div class="t" style="left:333.21px;top:756px;font-size:12px;transform:scaleX(0.8840);">C6:</div>
<div class="t" style="left:358.85px;top:756px;font-size:12px;color:#1a1aa6;transform:scaleX(0.8642);">0.0 %</div>
<div style="position:absolute;left:394px;top:757px;width:1px;height:13px;background:#b0b0b0"></div>
<div class="t" style="left:402.48px;top:756px;font-size:12px;transform:scaleX(0.8545);">C7:</div>
<div class="t" style="left:427.59px;top:756px;font-size:12px;color:#1a1aa6;transform:scaleX(0.8810);">0.0 %</div>
<div style="position:absolute;left:463px;top:757px;width:1px;height:13px;background:#b0b0b0"></div>
<div class="t" style="left:473.62px;top:756px;font-size:12px;transform:scaleX(1.0326);">Configure</div>
<svg style="left:7px;top:5px" width="22" height="20" viewBox="0 0 22 20"><defs><linearGradient id="mon" x1="0" y1="0" x2="0" y2="1"><stop offset="0" stop-color="#2b2f31"/><stop offset="1" stop-color="#4a5153"/></linearGradient></defs><rect x="3" y="5" width="14" height="9" fill="url(#mon)"/><rect x="7" y="14" width="6" height="2" fill="#cfcfcf"/><rect x="6" y="15.6" width="8" height="1.3" fill="#b4b4b4"/><path d="M6.22 7.54 L8.03 6.37 L8.36 4.24 L10.52 4.35 L12.03 2.81 L13.71 4.17 L15.84 3.80 L16.41 5.89 L18.35 6.84 L17.59 8.86 L18.61 10.77 L16.81 11.96 L16.51 14.10 L14.97 12.26 L15.79 11.32 L16.28 10.18 L16.39 8.94 L16.12 7.72 L15.48 6.65 L14.55 5.83 L13.41 5.33 L12.17 5.21 L10.95 5.47 L9.87 6.10 L9.04 7.03 L8.54 8.16Z" fill="#e51c1c"/><circle cx="10.4" cy="10.5" r="0.9" fill="#e51c1c"/><circle cx="5.5" cy="10.4" r="0.7" fill="#c81818"/></svg>
<svg style="left:595px;top:5px" width="20" height="20" viewBox="0 0 20 20"><path d="M4.5 10.5H15" stroke="#000" stroke-width="1"/></svg>
<svg style="left:640px;top:5px" width="20" height="20" viewBox="0 0 20 20"><rect x="5.5" y="5.5" width="10" height="9" fill="none" stroke="#c6c6c6"/></svg>
<svg style="left:686px;top:5px" width="20" height="20" viewBox="0 0 20 20"><path d="M5.5 5.5L15.5 15.5M15.5 5.5L5.5 15.5" stroke="#000" stroke-width="1"/></svg>
<svg style="left:4px;top:58px" width="4" height="20" viewBox="0 0 4 20"><rect x="0.5" y="2" width="2" height="2" fill="#a8a8a8"/><rect x="0.5" y="6" width="2" height="2" fill="#a8a8a8"/><rect x="0.5" y="10" width="2" height="2" fill="#a8a8a8"/><rect x="0.5" y="14" width="2" height="2" fill="#a8a8a8"/><rect x="0.5" y="18" width="2" height="2" fill="#a8a8a8"/></svg>
<svg style="left:12px;top:58px" width="24" height="22" viewBox="0 0 24 22"><path d="M4.6 4V19.4H20" fill="none" stroke="#000" stroke-width="1.2"/><rect x="7" y="6.5" width="1.8" height="11.2" rx=".6"/><rect x="10" y="9" width="1.8" height="8.7" rx=".6"/><rect x="13" y="13.3" width="1.8" height="4.4" rx=".6"/><rect x="16" y="13.3" width="1.8" height="4.4" rx=".6"/><path d="M7.2 4.2L15.5 10.2" stroke="#000" stroke-width="1.1"/><path d="M14 11.5L17.5 9.3L17.8 12.5Z"/></svg>
<svg style="left:38px;top:58px" width="24" height="22" viewBox="0 0 24 22"><rect x="4" y="18.8" width="16" height="1.2" rx=".5"/><circle cx="4.4" cy="4.4" r=".55"/><circle cx="4.4" cy="6.4" r=".55"/><circle cx="4.4" cy="8.4" r=".55"/><path d="M6.2 4.4H10.8M6.2 6.4H10.8M6.2 8.4H10.8" stroke="#000" stroke-width=".9"/><path d="M5.6 19V15.8Q6.5 15 7.4 15.8V19" fill="none" stroke="#000" stroke-width=".9"/><path d="M9.2 19V13Q10.1 12.2 11 13V19Z" fill="#888" stroke="#000" stroke-width=".9"/><path d="M12.7 19V10.4Q13.6 9.6 14.5 10.4V19Z" fill="#888" stroke="#000" stroke-width=".9"/><path d="M16.6 19V8.3H18.8V19" fill="#fff" stroke="#000" stroke-width=".9"/></svg>
<svg style="left:64px;top:58px" width="24" height="22" viewBox="0 0 24 22"><path d="M4.6 4V19.4H20" fill="none" stroke="#000" stroke-width="1.2"/><rect x="7" y="13.8" width="1.8" height="3.9" rx=".6"/><rect x="10" y="11" width="1.8" height="6.7" rx=".6"/><rect x="13" y="9" width="1.8" height="8.7" rx=".6"/><rect x="16" y="7.8" width="1.8" height="9.9" rx=".6"/><path d="M7.3 12.5L15.5 6.2" stroke="#000" stroke-width="1.1"/><path d="M14.2 4.6L18 4.2L16.8 7.6Z"/></svg>
<svg style="left:116px;top:58px" width="24" height="22" viewBox="0 0 24 22"><path d="M8.65 6.09 L9.58 5.66 L9.91 3.89 L13.29 3.89 L13.62 5.66 L14.55 6.09 L15.39 6.68 L17.09 6.09 L18.77 9.01 L17.41 10.18 L17.50 11.20 L17.41 12.22 L18.77 13.39 L17.09 16.31 L15.39 15.72 L14.55 16.31 L13.62 16.74 L13.29 18.51 L9.91 18.51 L9.58 16.74 L8.65 16.31 L7.81 15.72 L6.11 16.31 L4.43 13.39 L5.79 12.22 L5.70 11.20 L5.79 10.18 L4.43 9.01 L6.11 6.09 L7.81 6.68ZM14.30 11.20A2.7 2.7 0 1 0 8.90 11.20A2.7 2.7 0 1 0 14.30 11.20Z" fill-rule="evenodd"/><path d="M12.6 20.5L12.6 15.2Q13.5 12.2 17 12.2L21 12.2L21 20.5Z" fill="#fff"/><path d="M14.2 19.4Q13.4 15.2 17.6 14.6" fill="none" stroke="#222" stroke-width="1"/><path d="M16.8 13L19.8 14.6L16.9 16.2Z" fill="#222"/><path d="M14.6 19.6H16.4" stroke="#444" stroke-width=".9"/></svg>
<svg style="left:166px;top:58px" width="24" height="22" viewBox="0 0 24 22"><path d="M8.7 18.4H5.5Q4.7 18.4 4.7 17.6V5.2Q4.7 4.4 5.5 4.4H12.6L15.6 7.6V8.6" fill="none" stroke="#000" stroke-width="1.1"/><path d="M12.6 4.4L15.6 7.6L13 7.2Z"/><text x="7.8" y="15.7" font-family="Liberation Sans" font-weight="bold" font-size="6.3" textLength="11.2" lengthAdjust="spacingAndGlyphs">LOG</text></svg>
<svg style="left:245px;top:58px" width="24" height="22" viewBox="0 0 24 22"><circle cx="12.2" cy="11.8" r="7.6" fill="none" stroke="#333" stroke-width="1" stroke-dasharray="5 0.8"/><rect x="9.4" y="6.3" width="1" height="3.5" fill="#888"/><rect x="13.7" y="6.3" width="1" height="3.5" fill="#888"/><path d="M8.7 9.6H15.7V13.2Q15.7 15.7 12.2 15.7Q8.7 15.7 8.7 13.2Z"/><path d="M11.6 11.3L12.6 12.6L11.8 13.8" fill="none" stroke="#bbb" stroke-width=".7"/><rect x="11.6" y="15.5" width="1.2" height="2.3" fill="#333"/></svg>
<svg style="left:334px;top:62px" width="30" height="16" viewBox="0 0 30 16"><path d="M3.1 3.5H26.7V5.6H25.6V9.6H26.7V11.7H3.1V9.6H4.2V5.6H3.1Z"/><rect x="6.3" y="5.2" width="17.5" height="4.4" rx=".8" fill="#fff"/><rect x="18.2" y="5.6" width="5" height="3.6" fill="#a8a8a8"/><path d="M19 6.2h1.6v2.6h-1.6zM21.2 6.2h1.5v2.6h-1.5z" fill="#707070"/><rect x="4" y="11.7" width="22" height=".9" fill="#9a9a9a"/></svg>
<svg style="left:443px;top:58px" width="24" height="22" viewBox="0 0 24 22"><rect x="4.7" y="5.3" width="14.6" height="13" rx="1.3" fill="#fff" stroke="#000" stroke-width="1.1"/><rect x="5.2" y="15.3" width="13.6" height="2.6" fill="#567684"/><path d="M6 10.5H8L10.3 13.3L12.5 8.5L14.2 11.8H17.5" fill="none" stroke="#000" stroke-width="1.1"/></svg>
<svg style="left:522px;top:58px" width="24" height="22" viewBox="0 0 24 22"><rect x="7.8" y="6.6" width="10.6" height="10.5" fill="#fff" stroke="#1a1a1a" stroke-width="1.4"/><rect x="9.8" y="8.6" width="6.6" height="6.6" fill="none" stroke="#1a1a1a" stroke-width="1.1"/><path d="M9.5 4.2V6M11.2 4.2V6M13 4.2V6M14.7 4.2V6M16.3 4.2V6M9.5 17.6V19.4M11.2 17.6V19.4M13 17.6V19.4M14.7 17.6V19.4M16.3 17.6V19.4M5.2 8.3H7.2M5.2 10H7.2M5.2 11.8H7.2M5.2 13.5H7.2M5.2 15.3H7.2M18.9 8.3H20.9M18.9 10H20.9M18.9 11.8H20.9M18.9 13.5H20.9M18.9 15.3H20.9" stroke="#555" stroke-width=".8"/></svg>
<svg style="left:20px;top:238px" width="20" height="16" viewBox="0 0 20 16"><path d="M2.7 3.4H15.1V5.6H17.3V10H15.1V12.3H2.7Z" fill="#fff" stroke="#555" stroke-width="1"/><rect x="5" y="7.1" width="4.5" height="1.5" fill="#999"/><circle cx="10.7" cy="7.8" r="2"/></svg>
<svg style="left:20px;top:315px" width="20" height="18" viewBox="0 0 20 18"><rect x="2.7" y="3" width="14.6" height="9.4" fill="#fff" stroke="#666" stroke-width="1.1"/><rect x="2.2" y="2.5" width="15.6" height="1.4" fill="#888"/><path d="M8 12.8H12L13 15.6H7Z"/></svg>
<svg style="left:377px;top:315px" width="20" height="18" viewBox="0 0 20 18"><rect x="2.7" y="2.3" width="14.6" height="10.6" rx="1.2" fill="#fff" stroke="#666" stroke-width="1.1"/><rect x="3.2" y="10" width="13.6" height="1.7" fill="#999"/><rect x="8" y="13.3" width="3.7" height="2.5" fill="#555"/><path d="M4.3 9L7 5.3L8.8 7.6L10 5.8L12.5 7.6L15.8 3.8" fill="none" stroke="#555" stroke-width="1.1"/></svg>
<svg style="left:21px;top:467px" width="18" height="22" viewBox="0 0 18 22"><rect x="6.2" y="3.2" width="3.4" height="10" rx="1.7" fill="#fff" stroke="#666" stroke-width="1"/><circle cx="7.8" cy="15.8" r="3.6" fill="#222"/><path d="M5.3 15.5A2.6 2.6 0 0 1 7.3 13.3" stroke="#999" stroke-width="1" fill="none"/><path d="M11 5.4H13.6M11 8.4H13.6M11 11.4H13.6" stroke="#777" stroke-width="1"/></svg>
<svg style="left:376px;top:467px" width="22" height="22" viewBox="0 0 22 22"><circle cx="11" cy="11" r="7.4" fill="#fff" stroke="#777" stroke-width="1.6"/><path d="M7 15.2Q11 13.8 15 15.2" fill="none" stroke="#999" stroke-width="1"/><path d="M10.2 11.6L14.8 8.6" stroke="#666" stroke-width="1.4"/><circle cx="10.6" cy="11" r="1.3" fill="#333"/></svg>
<svg style="left:372px;top:716px" width="22" height="21" viewBox="0 0 22 21"><path d="M3.6 11.4A6.7 6.7 0 0 1 14.2 4.7" fill="none" stroke="#000" stroke-width="1.2"/><path d="M12.2 5.8L15.3 2.6L15 6.2Z"/><path d="M16.6 8.6A6.7 6.7 0 0 1 6.4 16.3" fill="none" stroke="#000" stroke-width="1.2"/><path d="M7.9 14.6L5 17.8L5.4 14.4Z"/></svg>
<svg style="left:516px;top:714px" width="24" height="24" viewBox="0 0 24 24"><path d="M4.3 11.3L9.7 16.5L19.7 6.7" fill="none" stroke="#000" stroke-width="1.2"/></svg>
<svg style="left:616px;top:714px" width="26" height="24" viewBox="0 0 26 24"><path d="M5.2 4.3L20.6 19.7M20.6 4.3L5.2 19.7" stroke="#111" stroke-width="1"/></svg>
<svg style="left:531px;top:760px" width="9" height="6" viewBox="0 0 9 6"><path d="M1.5 1.5H7.5L4.5 4.5Z"/></svg>
<svg style="left:702px;top:758px" width="16" height="14" viewBox="0 0 16 14"><rect x="11" y="3" width="1.5" height="1.5" fill="#a0a0a0"/><rect x="8" y="6" width="1.5" height="1.5" fill="#a0a0a0"/><rect x="11" y="6" width="1.5" height="1.5" fill="#a0a0a0"/><rect x="5" y="9" width="1.5" height="1.5" fill="#a0a0a0"/><rect x="8" y="9" width="1.5" height="1.5" fill="#a0a0a0"/><rect x="11" y="9" width="1.5" height="1.5" fill="#a0a0a0"/></svg>
<div style="position:absolute;left:549px;top:208px;width:153px;height:33px;box-sizing:border-box;border:3px solid #ee3b43;box-shadow:2px 3px 4px rgba(0,0,0,0.4), inset 2px 2px 4px rgba(0,0,0,0.4)"></div>
<div style="position:absolute;left:475px;top:330px;width:75px;height:20px;box-sizing:border-box;border:3px solid #1fa287;box-shadow:2px 3px 4px rgba(0,0,0,0.4), inset 2px 2px 4px rgba(0,0,0,0.4)"></div>
<div style="position:absolute;left:475px;top:367px;width:75px;height:20px;box-sizing:border-box;border:3px solid #ee3b43;box-shadow:2px 3px 4px rgba(0,0,0,0.4), inset 2px 2px 4px rgba(0,0,0,0.4)"></div>
<div style="position:absolute;left:306px;top:706px;width:48px;height:31px;box-sizing:border-box;border:3px solid #ee3b43;box-shadow:2px 3px 4px rgba(0,0,0,0.4), inset 2px 2px 4px rgba(0,0,0,0.4)"></div>
<div style="position:absolute;left:664px;top:650px;width:47px;height:33px;box-sizing:border-box;border:3px solid #ee3b43;box-shadow:2px 3px 4px rgba(0,0,0,0.4), inset 2px 2px 4px rgba(0,0,0,0.4)"></div>
</body></html>
